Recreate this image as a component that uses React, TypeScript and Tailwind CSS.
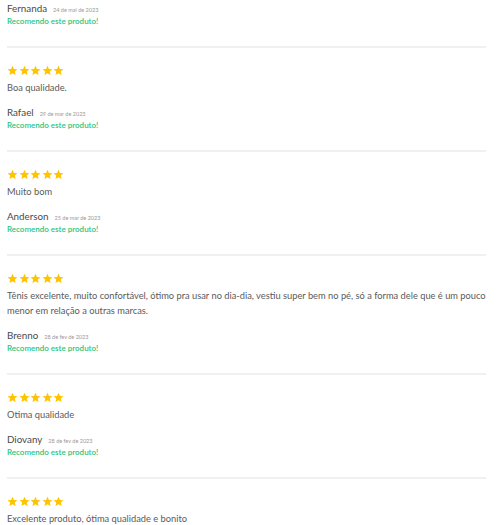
import React from "react";

interface Review {
  text?: string;
  name?: string;
  date?: string;
}

const reviews: Review[] = [
  { name: "Fernanda", date: "24 de mai de 2023" },
  { text: "Boa qualidade.", name: "Rafael", date: "29 de mar de 2023" },
  { text: "Muito bom", name: "Anderson", date: "25 de mar de 2023" },
  {
    text: "Tênis excelente, muito confortável, ótimo pra usar no dia-dia, vestiu super bem no pé, só a forma dele que é um pouco menor em relação a outras marcas.",
    name: "Brenno",
    date: "28 de fev de 2023",
  },
  { text: "Otima qualidade", name: "Diovany", date: "28 de fev de 2023" },
  { text: "Excelente produto, ótima qualidade e bonito" },
];

const Star = () => (
  <svg width="11" height="11" viewBox="0 0 24 24">
    <path
      fill="#ffc400"
      d="M12 1.5l3.1 7.1 7.7.7-5.8 5.1 1.7 7.6L12 18l-6.7 4 1.7-7.6-5.8-5.1 7.7-.7z"
    />
  </svg>
);

const Stars = () => (
  <div className="flex h-3 items-center gap-[0.5px]">
    {[0, 1, 2, 3, 4].map((i) => (
      <Star key={i} />
    ))}
  </div>
);

const ReviewItem: React.FC<{ review: Review; first: boolean; last: boolean }> = ({ review, first, last }) => (
  <div className={`${first ? "pt-[1px]" : "pt-4"} ${last ? "" : "pb-[19px] border-b-2 border-[#f0f0f0]"}`}>
    {!first && <Stars />}
    {review.text && (
      <p className="mt-1 text-[9.3px] leading-[15px] text-[#5a5a5a]">{review.text}</p>
    )}
    {review.name && (
      <>
        <div className={`${first ? "" : "mt-[10px]"} flex items-baseline h-[14px] leading-[14px]`}>
          <span className="text-[9.8px] text-[#4a4a4a]">{review.name}</span>
          <span className="ml-[6px] text-[5.5px] text-[#999]">{review.date}</span>
        </div>
        <div className="text-[8px] leading-[12px] font-semibold text-[#27c67c]">Recomendo este produto!</div>
      </>
    )}
  </div>
);

export default function App() {
  return (
    <div className="w-[500px] h-[525px] overflow-hidden bg-white pl-[7px] pr-[14px]" style={{ fontFamily: "Lato, 'Open Sans', sans-serif" }}>
      {reviews.map((r, i) => (
        <ReviewItem key={i} review={r} first={i === 0} last={i === reviews.length - 1} />
      ))}
    </div>
  );
}
